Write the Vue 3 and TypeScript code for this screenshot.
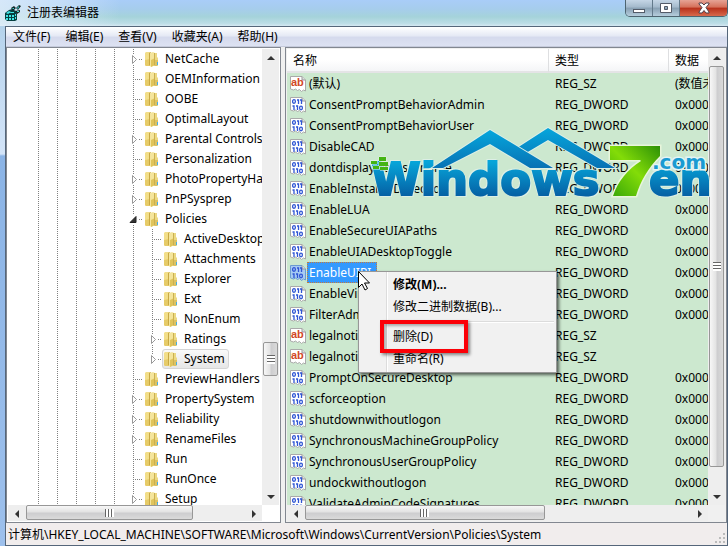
<script setup lang="ts">
interface TreeNode { name: string; depth: number; state: 'open' | 'closed' | 'leaf'; last?: boolean; selected?: boolean }
interface RegValue { name: string; type: string; data: string; selected?: boolean }

const menus = ['文件(F)', '编辑(E)', '查看(V)', '收藏夹(A)', '帮助(H)']

const tree: TreeNode[] = [
  { name: 'NetCache', depth: 5, state: 'closed' },
  { name: 'OEMInformation', depth: 5, state: 'leaf' },
  { name: 'OOBE', depth: 5, state: 'leaf' },
  { name: 'OptimalLayout', depth: 5, state: 'leaf' },
  { name: 'Parental Controls', depth: 5, state: 'closed' },
  { name: 'Personalization', depth: 5, state: 'leaf' },
  { name: 'PhotoPropertyHandler', depth: 5, state: 'closed' },
  { name: 'PnPSysprep', depth: 5, state: 'closed' },
  { name: 'Policies', depth: 5, state: 'open' },
  { name: 'ActiveDesktop', depth: 6, state: 'leaf' },
  { name: 'Attachments', depth: 6, state: 'leaf' },
  { name: 'Explorer', depth: 6, state: 'leaf' },
  { name: 'Ext', depth: 6, state: 'leaf' },
  { name: 'NonEnum', depth: 6, state: 'leaf' },
  { name: 'Ratings', depth: 6, state: 'closed' },
  { name: 'System', depth: 6, state: 'closed', last: true, selected: true },
  { name: 'PreviewHandlers', depth: 5, state: 'leaf' },
  { name: 'PropertySystem', depth: 5, state: 'closed' },
  { name: 'Reliability', depth: 5, state: 'closed' },
  { name: 'RenameFiles', depth: 5, state: 'closed' },
  { name: 'Run', depth: 5, state: 'leaf' },
  { name: 'RunOnce', depth: 5, state: 'leaf' },
  { name: 'Setup', depth: 5, state: 'closed' },
]

const dword = (name: string, selected = false): RegValue => ({ name, type: 'REG_DWORD', data: '0x00000001', selected })
const values: RegValue[] = [
  { name: '(默认)', type: 'REG_SZ', data: '(数值未设置)' },
  dword('ConsentPromptBehaviorAdmin'),
  dword('ConsentPromptBehaviorUser'),
  dword('DisableCAD'),
  dword('dontdisplaylastusername'),
  dword('EnableInstallerDetection'),
  dword('EnableLUA'),
  dword('EnableSecureUIAPaths'),
  dword('EnableUIADesktopToggle'),
  dword('EnableUIPI', true),
  dword('EnableVirtualization'),
  dword('FilterAdministratorToken'),
  { name: 'legalnoticecaption', type: 'REG_SZ', data: '' },
  { name: 'legalnoticetext', type: 'REG_SZ', data: '' },
  dword('PromptOnSecureDesktop'),
  dword('scforceoption'),
  dword('shutdownwithoutlogon'),
  dword('SynchronousMachineGroupPolicy'),
  dword('SynchronousUserGroupPolicy'),
  dword('undockwithoutlogon'),
  dword('ValidateAdminCodeSignatures'),
]
</script>

<template>
  <div class="window">
    <header class="titlebar">
      <svg class="app-icon" viewBox="0 0 16 16" aria-hidden="true">
        <path d="M0 8l4-3 3-1 4 2 1 3v6l-2 1H2l-2-2z" fill="#063f40" />
        <path d="M1 8l3-2 2 1-3 2zM1 10h2v2H1zM4 10h2v2H4zM7 10h2v2H7zM1 13h2v2H1zM4 13h2v2H4zM7 13h2v2H7zM10 9l1 0v2h-1zM10 12l1 0v2h-1zM6 7h3v1H5z" fill="#3fe6e6" />
        <path d="M6 3l3-2 2 2-3 3zM11 3l3-3 2 1-3 4zM10 6l5-1v2l-3 2z" fill="#122728" />
        <path d="M7 3h2v1H8zM12 3l2-2v1l-1 2zM12 6h2v1h-2z" fill="#3fd5d4" />
      </svg>
      <h1>注册表编辑器</h1>
      <div class="caption">
        <button type="button" aria-label="最小化"><svg viewBox="0 0 14 12"><rect x="1.500" y="7.500" width="11" height="3" fill="#fff" stroke="#535b68" /></svg></button>
        <button type="button" aria-label="最大化"><svg viewBox="0 0 14 12"><path d="M1.500 1.500h11v9h-11zM5.500 4.500v3h3v-3z" fill="#fff" fill-rule="evenodd" stroke="#535b68" /></svg></button>
        <button type="button" class="close" aria-label="关闭"><svg viewBox="0 0 14 12"><path d="M2 1h3l2 2 2-2h3v1L9 5.500 12 10v1H9L7 8.500 5 11H2v-1l3-4.500L2 2z" fill="#fff" stroke="#50404a" /></svg></button>
      </div>
    </header>

    <div class="client">
      <nav class="menubar">
        <button v-for="m in menus" :key="m" type="button">{{ m }}</button>
      </nav>

      <main class="panes">
        <section class="pane tree-pane">
          <ul class="tree">
            <li v-for="n in tree" :key="n.name">
              <span v-for="g in n.depth" :key="g" class="guide"></span>
              <span class="node" :class="[n.state, { last: n.last }]">
                <svg v-if="n.state === 'closed'" viewBox="0 0 9 9"><rect width="9" height="9" fill="#fff" /><path d="M2.500 .5v8l4-4z" fill="#fff" stroke="#999" /></svg>
                <svg v-if="n.state === 'open'" viewBox="0 0 9 9"><rect width="9" height="9" fill="#fff" /><path d="M7 1.500v6H1z" fill="#333" stroke="#222" /></svg>
              </span>
              <button type="button" class="key" :class="{ selected: n.selected }">
                <svg class="folder" viewBox="0 0 14 16" aria-hidden="true">
                  <path d="M0 2l1-1h4v14H1l-1-1z" fill="#f2de8a" />
                  <path d="M0 9l5-1v7H1l-1-1z" fill="#e6cb68" />
                  <path d="M9 2h3v4l1 1v7l-1 1H9z" fill="#ecd982" />
                  <path d="M9 9h4v5l-1 1H9z" fill="#ddc264" />
                  <path d="M4 2l2-1v14l-2-1z" fill="#c9a943" />
                  <path d="M5 2l3-1 2 1v12l-4 2-1-1z" fill="#f4e59c" />
                  <path d="M6 9l4-2v7l-4 2z" fill="#e0c45c" />
                  <path d="M9 2h1v12H9z" fill="#cbb050" />
                  <path d="M12 11h1v3h-1z" fill="#45aee2" />
                </svg>
                <span>{{ n.name }}</span>
              </button>
            </li>
          </ul>
          <div class="vbar tree-vbar">
            <button type="button" aria-label="向上滚动"><svg viewBox="0 0 8 8"><path d="M4 2l4 4H0z" /></svg></button>
            <div class="track"><i class="thumb"></i></div>
            <button type="button" aria-label="向下滚动"><svg viewBox="0 0 8 8"><path d="M0 2h8L4 6z" /></svg></button>
          </div>
          <div class="hbar tree-hbar">
            <button type="button" aria-label="向左滚动"><svg viewBox="0 0 8 8"><path d="M6 0v8L2 4z" /></svg></button>
            <div class="track"><i class="thumb"></i></div>
            <button type="button" aria-label="向右滚动"><svg viewBox="0 0 8 8"><path d="M2 0l4 4-4 4z" /></svg></button>
          </div>
        </section>

        <section class="pane list-pane">
          <div class="list">
            <table>
              <colgroup><col class="c-name" /><col class="c-type" /><col /></colgroup>
              <thead><tr><th>名称</th><th>类型</th><th>数据</th></tr></thead>
              <tbody>
                <tr v-for="v in values" :key="v.name" :class="{ selected: v.selected }">
                  <td>
                    <div class="value">
                      <svg class="value-icon" viewBox="0 0 16 16" aria-hidden="true">
                        <path d="M.5 .5H12L15.500 4v11l-2-1-2 1.500-2-2-2 1-2-1.500-2 1-3-1z" class="page" />
                        <path d="M12 .5V4h3.500" fill="#ddd" stroke="#999" />
                        <text v-if="v.type === 'REG_SZ'" x="1" y="10" class="ab">ab</text>
                        <g v-else class="bits">
                          <ellipse cx="4" cy="4.500" rx="1.400" ry="1.800" />
                          <path d="M7 3h1.500v4M10 3h1.500v4M2.500 9H4v4M6 9h1.500v4" />
                          <ellipse cx="11" cy="11" rx="1.400" ry="1.800" />
                        </g>
                      </svg>
                      <span class="label">{{ v.name }}</span>
                    </div>
                  </td>
                  <td>{{ v.type }}</td>
                  <td>{{ v.data }}</td>
                </tr>
              </tbody>
            </table>
          </div>
          <div class="vbar list-vbar">
            <button type="button" aria-label="向上滚动"><svg viewBox="0 0 8 8"><path d="M4 2l4 4H0z" /></svg></button>
            <div class="track"><i class="thumb"></i></div>
            <button type="button" aria-label="向下滚动"><svg viewBox="0 0 8 8"><path d="M0 2h8L4 6z" /></svg></button>
          </div>
          <div class="hbar list-hbar">
            <button type="button" aria-label="向左滚动"><svg viewBox="0 0 8 8"><path d="M6 0v8L2 4z" /></svg></button>
            <div class="track"><i class="thumb"></i></div>
            <button type="button" aria-label="向右滚动"><svg viewBox="0 0 8 8"><path d="M2 0l4 4-4 4z" /></svg></button>
          </div>
        </section>
      </main>

      <footer class="status">
        <span>计算机\HKEY_LOCAL_MACHINE\SOFTWARE\Microsoft\Windows\CurrentVersion\Policies\System</span>
        <svg viewBox="0 0 12 12" aria-hidden="true"><path d="M8 0h2v2H8zM8 4h2v2H8zM4 4h2v2H4zM8 8h2v2H8zM4 8h2v2H4zM0 8h2v2H0z" fill="#bbb" /></svg>
      </footer>
    </div>

    <svg class="watermark" viewBox="0 0 350 76" role="img" aria-label="Windows7en.com">
      <defs>
        <linearGradient id="blue" gradientUnits="userSpaceOnUse" x1="0" y1="36" x2="0" y2="70"><stop offset="0" stop-color="#07a5d9" /><stop offset="1" stop-color="#0560a4" /></linearGradient>
        <linearGradient id="roof" x1="0" y1="0" x2="0" y2="1"><stop offset="0" stop-color="#05a6dc" /><stop offset="1" stop-color="#0872b4" /></linearGradient>
        <linearGradient id="green" x1="1" y1="0" x2="0" y2="1"><stop offset="0" stop-color="#2c9006" /><stop offset=".5" stop-color="#83dc08" /><stop offset="1" stop-color="#36a508" /></linearGradient>
      </defs>
      <g class="brand"><text x="3" y="69">Windows</text><text x="281" y="69">en</text></g>
      <g fill="url(#roof)" stroke="#dcefe6" paint-order="stroke" stroke-width="2">
        <path d="M149 22l31-20 67 40h-18L180 14l-22 13z" />
        <path d="M64 42L122 4l63 38h-23L122 18 75 42z" />
      </g>
      <path d="M11 31h7v4h-7zM3 35h6v3H3zM11 36h9v4h-9zM5 40h6v3H5zM12 41h8v3h-8z" fill="#44b413" stroke="#e5f2e3" paint-order="stroke" />
      <text x="284" y="43" class="com">.com</text>
      <path d="M242 20h50v10c-12 12-20 26-24 40h-23c5-15 15-27 28-35l-1-1h-30z" fill="url(#green)" stroke="#e8f5dc" stroke-width="3" paint-order="stroke" />
    </svg>

    <div class="menu" role="menu">
      <button type="button" role="menuitem" class="default">修改(M)...</button>
      <button type="button" role="menuitem">修改二进制数据(B)...</button>
      <hr />
      <button type="button" role="menuitem" class="marked">删除(D)</button>
      <button type="button" role="menuitem">重命名(R)</button>
    </div>
    <svg class="cursor" viewBox="0 0 12 20" aria-hidden="true"><path d="M.5.500v16l3.500-3.500 3 6 2.500-1.500-3-5.500h5z" fill="#fff" stroke="#000" /></svg>
  </div>
</template>

<style>
html, body, #app { height: 100%; }
body { margin: 0; overflow: hidden; }
</style>

<style scoped>
*, *::after { box-sizing: border-box; }
.window {
  position: relative; display: flex; flex-direction: column; height: 100vh; overflow: hidden;
  padding-left: 5px; color: #000;
  font: 12px/20px "Noto Sans", "Noto Sans CJK SC", sans-serif;
  background: linear-gradient(180deg, #a9cde4 0, #b9d5ee 40px, #d3e4f8 154px, #8bb4e6 156px, #9dc0ec 100%);
}
button { font: inherit; color: inherit; border: 0; padding: 0; background: none; text-align: left; white-space: nowrap; }
svg { display: block; flex: none; }

.titlebar {
  display: flex; align-items: center; gap: 6px; height: 26px; flex: none; margin-left: -5px; padding-left: 5px;
  background:
    linear-gradient(90deg, rgba(225, 238, 250, .8) 0, rgba(225, 238, 250, .5) 60px, rgba(225, 238, 250, 0) 120px),
    linear-gradient(180deg, #a9cdf8, #a6cdec 35%, #a5d3da 65%, #bcdde6 90%, #d5e8f2);
}
.app-icon { width: 16px; height: 16px; }
h1 { flex: 1; margin: 0; font-size: 12px; font-weight: 400; line-height: 24px; }
.caption { display: flex; align-self: flex-start; height: 17px; border: 1px solid #4d6470; border-top: 0; border-radius: 0 0 5px 5px; overflow: hidden; }
.caption button { display: flex; justify-content: center; align-items: center; width: 27px; border-right: 1px solid #62798a; background: linear-gradient(#c5d6e6, #a3b9cb 45%, #879fb2 50%, #b5cddc); }
.caption .close { width: 47px; border: 0; background: linear-gradient(#e6a395, #d5705a 45%, #b8301a 50%, #d76a4d); }
.caption svg { width: 14px; height: 12px; }

.client { flex: 1; min-height: 0; display: flex; flex-direction: column; border: 1px solid #55667a; background: #f0f0f0; }
.menubar { display: flex; gap: 15px; height: 20px; flex: none; padding-left: 7px; background: linear-gradient(#fff, #e6eaf5 45%, #d5daed 55%, #dde2f2); border-bottom: 1px solid #c5cadb; }
.panes { flex: 1; min-height: 0; display: grid; grid-template-columns: 275px minmax(0, 1fr); gap: 4px; }
.pane { display: grid; grid-template: minmax(0, 1fr) 16px / minmax(0, 1fr) 17px; min-height: 0; border: 1px solid #828790; padding: 1px; background: #fff; }
.list-pane { background: #f0f0f0; }

.tree { margin: 0; padding: 0 0 0 21px; list-style: none; overflow: hidden; }
.tree li { display: flex; height: 20px; }
.guide, .node { position: relative; flex: none; width: 19px; height: 20px; background: repeating-linear-gradient(180deg, #808080 0 1px, transparent 1px 2px) 9px 0 / 1px 100% no-repeat; }
.node { background: repeating-linear-gradient(180deg, #808080 0 1px, transparent 1px 2px) 9px 0 / 1px 100% no-repeat, repeating-linear-gradient(90deg, #808080 0 1px, transparent 1px 2px) 9px 10px / 10px 1px no-repeat; }
.node.last { background-size: 1px 10px, 10px 1px; }
.node svg { width: 9px; height: 9px; margin: 6px 0 0 6px; }
.node.open svg { margin-left: 5px; }
.key { display: flex; align-items: center; height: 20px; padding: 0 3px 0 1px; gap: 6px; border: 1px solid transparent; border-radius: 3px; }
.key.selected { border-color: #d5d5d5; background: linear-gradient(#fafafa, #e6e6e6); }
.folder { width: 14px; height: 16px; }

.vbar, .hbar { display: flex; background: #eee; }
.vbar { flex-direction: column; }
.vbar > button, .hbar > button { display: flex; flex: none; width: 17px; height: 17px; align-items: center; justify-content: center; }
.vbar svg, .hbar svg { width: 8px; height: 8px; fill: #333; }
.track { flex: 1; display: flex; min-height: 0; min-width: 0; }
.vbar .track { flex-direction: column; }
.thumb { flex: none; border: 1px solid #979797; border-radius: 2px; }
.vbar .thumb { width: 15px; margin-left: 1px; background: repeating-linear-gradient(180deg, #666 0 1px, #fff 1px 3px) center / 8px 9px no-repeat, linear-gradient(90deg, #f7f7f7, #e3e3e3 45%, #cdcdcf 55%, #dadada); }
.hbar .thumb { height: 15px; margin-left: 1px; background: repeating-linear-gradient(90deg, #666 0 1px, #fff 1px 3px) center / 9px 8px no-repeat, linear-gradient(#f7f7f7, #e3e3e3 45%, #cdcdcf 55%, #dadada); }
.tree-vbar .track { padding-top: 276px; }
.tree-vbar .thumb { height: 34px; }
.tree-hbar .thumb { width: 76%; }
.list-vbar .thumb { height: 95%; }
.list-hbar .thumb { width: 62%; }

.list { overflow: hidden; background: #cce8cf; }
table { width: 100%; table-layout: fixed; border-collapse: separate; border-spacing: 0; }
.c-name { width: 262px; }
.c-type { width: 120px; }
th { height: 24px; padding: 1px 0 0 6px; font-weight: 400; text-align: left; border-right: 1px solid #dedfe1; border-bottom: 2px solid #e4e4e6; background: linear-gradient(#fff 50%, #f4f5f7); }
th:last-child { border-right: 0; }
td { height: 21px; padding: 0 0 0 6px; white-space: nowrap; overflow: hidden; line-height: 21px; }
.value { display: flex; align-items: center; height: 21px; margin-left: -3px; gap: 1px; }
.value-icon { width: 16px; height: 16px; }
.page { fill: #fff; stroke: #aaa; }
.ab { font: bold 11px "Liberation Sans", sans-serif; fill: #d24726; }
.bits { fill: none; stroke: #2f55d4; stroke-width: 1.3; }
.label { padding: 0 5px 0 1px; line-height: 19px; border: 1px solid transparent; }
.selected .label { color: #fff; background: #3399ff; border: 1px dotted #c47a3c; }
.selected .page { fill: #a6cbf3; stroke: #6a9bd1; }

.status { display: flex; align-items: flex-end; justify-content: space-between; height: 22px; flex: none; padding-left: 2px; background: #f1eded; }
.status svg { width: 12px; height: 12px; }

.watermark { position: absolute; left: 368px; top: 126px; width: 350px; height: 76px; }
.brand { font: bold 45px "DejaVu Sans", sans-serif; fill: url(#blue); stroke: url(#blue); stroke-width: 2; filter: drop-shadow(1px 1px 0 #dcefe6) drop-shadow(-1px -1px 0 #dcefe6); }
.com { font: bold 20px "DejaVu Sans", sans-serif; fill: #1a9bd2; stroke: #e3f4f5; stroke-width: 3; paint-order: stroke; }

.menu { position: absolute; left: 358px; top: 271px; width: 199px; padding: 2px; border: 1px solid #979797; box-shadow: 2px 2px 3px rgba(0, 0, 0, .6); background: linear-gradient(90deg, #f1f1f1 27px, #dcdcdc 27px 28px, #fff 28px 29px, #f1f1f1 29px); }
.menu button { display: block; width: 100%; height: 22px; padding-left: 32px; }
.menu .default { font-weight: 700; }
.menu hr { height: 2px; margin: 3px 0 3px 30px; border: 0; border-top: 1px solid #dcdcdc; background: #fff; }
.menu .marked { position: relative; }
.menu .marked::after { content: ""; position: absolute; left: 19px; top: -6px; width: 88px; height: 33px; border: 4px solid #fb0007; box-shadow: 2px 2px 3px rgba(0, 0, 0, .45), inset 2px 2px 3px rgba(0, 0, 0, .3); }
.cursor { position: absolute; left: 358px; top: 271px; width: 12px; height: 20px; }
</style>
